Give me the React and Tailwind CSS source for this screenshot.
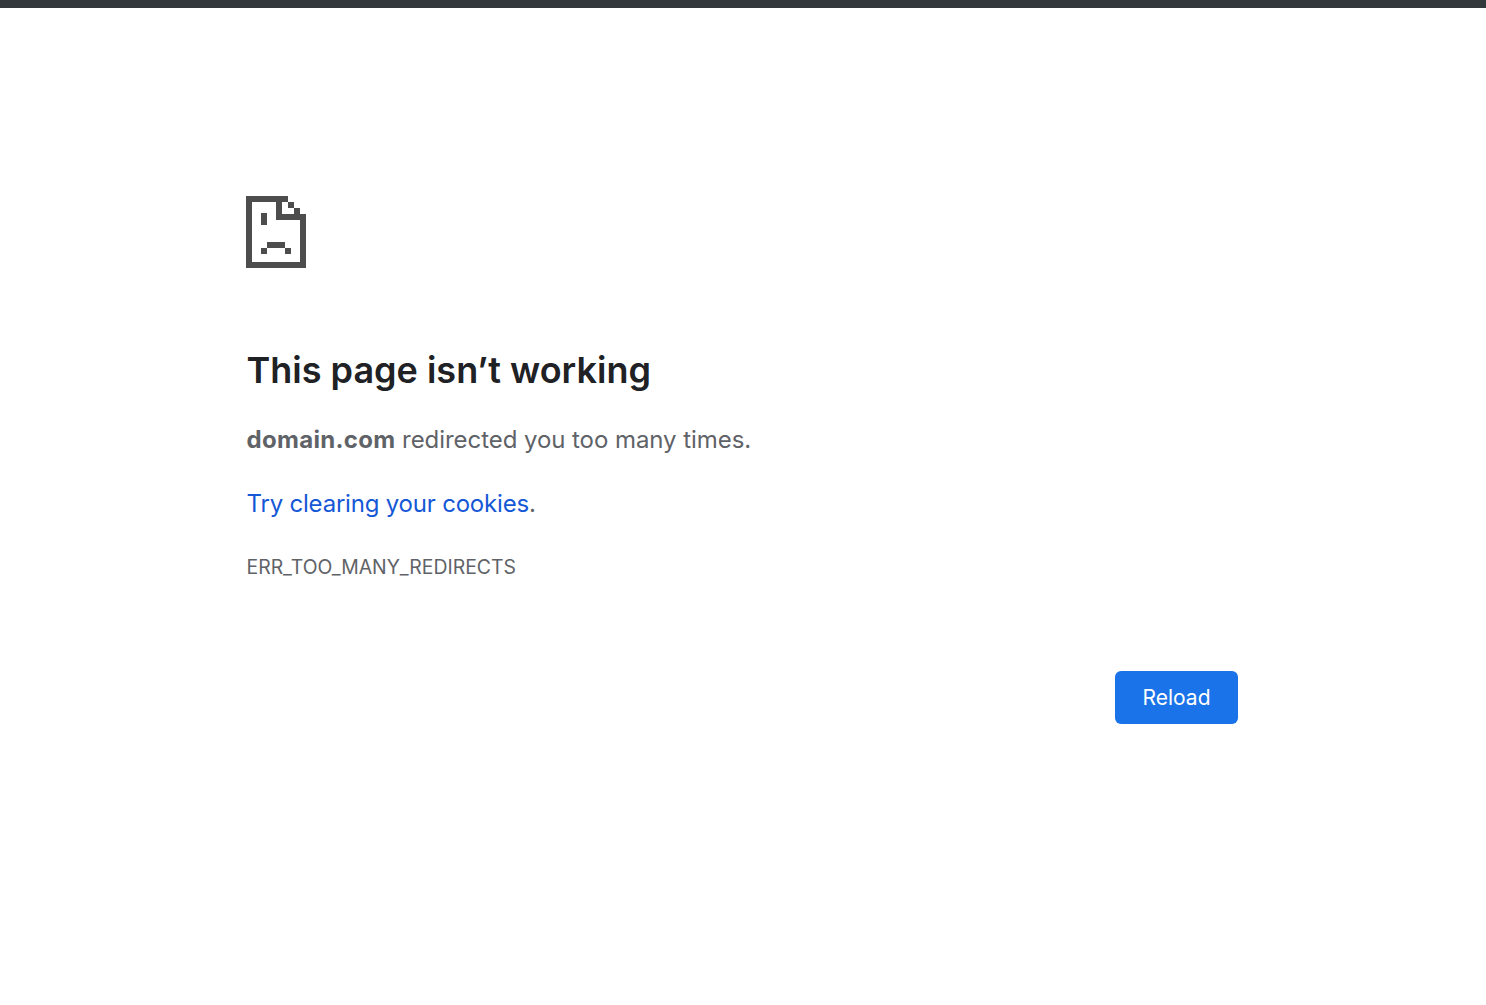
export default function App() {
  return (
    <div className="min-h-[1005px] bg-white font-['Inter',sans-serif] flex flex-col">
      <div className="h-2 bg-[#33383d]" />
      <main className="pl-[246.5px] pr-[248px] pt-[188px]">
        <svg width="60" height="72" viewBox="0 0 60 72" className="block -ml-[0.5px]" aria-hidden="true">
          <path fill="#4d4d4d" d="M0 0H42V6H36V18H60V72H0V0ZM6 6V66H54V24H30V6H6Z" fillRule="evenodd" />
          <path fill="#4d4d4d" d="M42 6H48V12H42ZM48 12H54V18H48ZM15 17H21V29H15ZM21 46H39V52H21ZM15 52H21V58H15ZM39 52H45V58H39Z" />
        </svg>
        <h1 className="mt-[78px] text-[36px] leading-[48px] font-semibold text-[#202124]">
          This page isn’t working
        </h1>
        <p className="mt-[30px] text-[24px] leading-[32px] text-[#5f6368] tracking-[-0.06px]">
          <strong className="font-bold tracking-[0.3px]">domain.com</strong> redirected you too many times.
        </p>
        <p className="mt-[32px] text-[24px] leading-[32px] text-[#5f6368] tracking-[-0.2px]">
          <a className="text-[#1558d6]" href="#">Try clearing your cookies</a>.
        </p>
        <p className="mt-[34px] text-[19.4px] leading-[26px] text-[#5f6368]">ERR_TOO_MANY_REDIRECTS</p>
        <div className="mt-[91px] flex justify-end">
          <button className="w-[123px] h-[53px] pt-px rounded-[6px] bg-[#1a73e8] text-white text-[21px] font-normal">
            Reload
          </button>
        </div>
      </main>
    </div>
  );
}
